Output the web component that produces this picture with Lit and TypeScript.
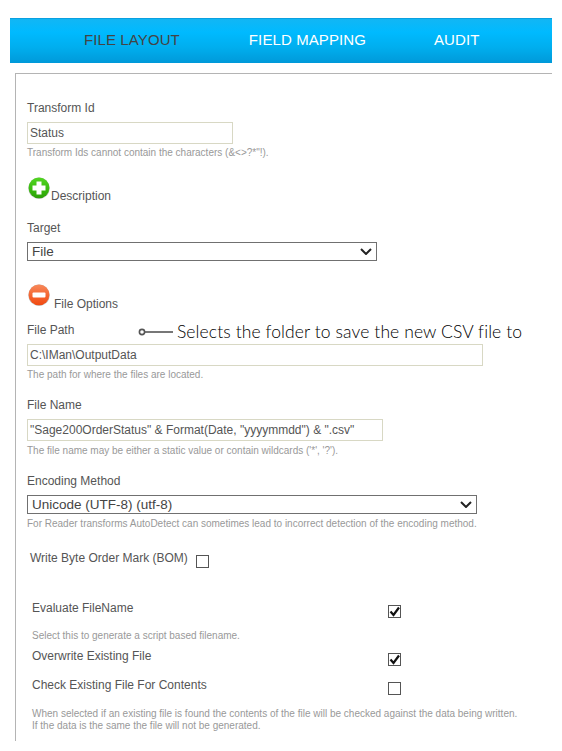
import { LitElement, html, css, svg } from 'lit';
import { customElement } from 'lit/decorators.js';

const chevron = html`<svg class="chev" width="12" height="7" viewBox="0 0 12 7"><path d="M1 1 L6 6 L11 1" fill="none" stroke="#222" stroke-width="2"/></svg>`;
const tick = svg`<path d="M2.5 6.5 L5.5 10 L11 2.5" fill="none" stroke="#111" stroke-width="2.2"/>`;

@customElement('app-root')
export class AppRoot extends LitElement {
  static styles = css`
    :host {
      display: block;
      width: 562px;
      height: 751px;
      overflow: hidden;
      background: #fff;
      font-family: 'Liberation Sans', Arial, sans-serif;
      color: #555;
      font-size: 12px;
    }
    * { box-sizing: border-box; }

    nav {
      margin: 18px 10px 10px;
      height: 45px;
      display: flex;
      align-items: center;
      padding: 0 0 3px 74px;
      border-top: 1px solid #0aa0e0;
      background: linear-gradient(#12b6f4 0, #00baff 30%, #00aeee 65%, #0099d9 100%);
      font-size: 15px;
      letter-spacing: 0.1px;
      color: #fff;
    }
    nav a { white-space: nowrap; }
    nav a.active { color: #444; }
    nav a + a { margin-left: 69px; }
    nav a + a + a { margin-left: 68px; }

    .panel {
      margin-left: 15px;
      width: 537px;
      height: 668px;
      border-top: 1px solid #b4b4b4;
      border-left: 1px solid #b4b4b4;
      padding: 27px 0 0 11px;
      position: relative;
    }

    .label { line-height: 14px; height: 14px; }
    .hint { font-size: 10px; line-height: 12px; color: #999; white-space: nowrap; }

    .text {
      height: 22px;
      border: 1px solid #d8d8c4;
      padding-left: 2px;
      line-height: 20px;
      color: #555;
      white-space: nowrap;
    }
    .select {
      height: 19px;
      border: 1px solid #707070;
      padding: 0 4px 0 4px;
      display: flex;
      align-items: center;
      justify-content: space-between;
      font-size: 13.5px;
      color: #444;
    }

    .toggle { display: flex; align-items: flex-end; height: 22px; margin-left: 1px; }
    .toggle .icon { width: 22px; height: 22px; flex: none; }

    .check {
      width: 13px;
      height: 13px;
      border: 1px solid #555;
      background: #fff;
      flex: none;
      display: block;
    }
    .check svg { display: block; margin: -1px 0 0 -1px; }

    .row { display: flex; align-items: flex-start; }
    .row .name { width: 356px; line-height: 14px; }

    .note {
      position: absolute;
      left: 122px;
      top: 248px;
      display: flex;
      align-items: center;
      gap: 3px;
      font-family: Lato, 'Liberation Sans', sans-serif;
      font-size: 17.5px;
      font-weight: 300;
      letter-spacing: 0.1px;
      color: #000;
      white-space: nowrap;
      line-height: 20px;
    }
  `;

  render() {
    return html`
      <nav>
        <a class="active">FILE LAYOUT</a>
        <a>FIELD MAPPING</a>
        <a>AUDIT</a>
      </nav>
      <div class="panel">
        <div class="label" style="margin-bottom:7px">Transform Id</div>
        <div class="text" style="width:206px">Status</div>
        <div class="hint" style="margin-top:3px">Transform Ids cannot contain the characters (&amp;&lt;&gt;?*"!).</div>

        <div class="toggle" style="margin-top:18px">
          <svg class="icon" viewBox="0 0 22 22">
            <defs>
              <linearGradient id="g" x1="0" y1="0" x2="0" y2="1"><stop offset="0" stop-color="#52d622"/><stop offset="0.6" stop-color="#38b90e"/><stop offset="1" stop-color="#2c9f08"/></linearGradient>
            </defs>
            <circle cx="11" cy="11.3" r="10.7" fill="#c4c4c4"/>
            <circle cx="11" cy="10.8" r="10.4" fill="url(#g)"/>
            <path d="M8.5 4.5h5v4h4v5h-4v4h-5v-4h-4v-5h4z" fill="#fff"/>
          </svg>
          <span style="line-height:14px;margin:0 0 -4px 1px">Description</span>
        </div>

        <div class="label" style="margin-top:22px;margin-bottom:7px">Target</div>
        <div class="select" style="width:350px"><span>File</span>${chevron}</div>

        <div class="toggle" style="margin-top:23px">
          <svg class="icon" viewBox="0 0 22 22">
            <defs>
              <linearGradient id="r" x1="0" y1="0" x2="0" y2="1"><stop offset="0" stop-color="#f78a5c"/><stop offset="0.6" stop-color="#f5612c"/><stop offset="1" stop-color="#f04a12"/></linearGradient>
            </defs>
            <circle cx="11" cy="11.3" r="10.7" fill="#c4c4c4"/>
            <circle cx="11" cy="10.8" r="10.4" fill="url(#r)"/>
            <rect x="4.5" y="8.5" width="13" height="5" rx="1" fill="#fff"/>
          </svg>
          <span style="line-height:14px;margin:0 0 -5px 4px">File Options</span>
        </div>

        <div class="label" style="margin-top:17px;margin-bottom:7px">File Path</div>
        <div class="text" style="width:456px">C:\\IMan\\OutputData</div>
        <div class="hint" style="margin-top:3px">The path for where the files are located.</div>

        <div class="note">
          <svg width="36" height="10" viewBox="0 0 36 10"><circle cx="4" cy="5" r="2.6" fill="none" stroke="#555" stroke-width="1.6"/><path d="M7 5h28" stroke="#555" stroke-width="1.6"/></svg>
          <span>Selects the folder to save the new CSV file to</span>
        </div>

        <div class="label" style="margin-top:17px;margin-bottom:7px">File Name</div>
        <div class="text" style="width:356px">"Sage200OrderStatus" &amp; Format(Date, "yyyymmdd") &amp; ".csv"</div>
        <div class="hint" style="margin-top:4px">The file name may be either a static value or contain wildcards ('*', '?').</div>

        <div class="label" style="margin-top:17px;margin-bottom:7px">Encoding Method</div>
        <div class="select" style="width:450px"><span>Unicode (UTF-8) (utf-8)</span>${chevron}</div>
        <div class="hint" style="margin-top:4px">For Reader transforms AutoDetect can sometimes lead to incorrect detection of the encoding method.</div>

        <div class="row" style="margin:21px 0 0 3px">
          <span style="line-height:14px;margin-right:8px">Write Byte Order Mark (BOM)</span>
          <span class="check" style="margin-top:4px"></span>
        </div>

        <div class="row" style="margin:33px 0 0 5px">
          <span class="name">Evaluate FileName</span>
          <span class="check" style="margin-top:4px"><svg width="14" height="14" viewBox="0 0 14 14">${tick}</svg></span>
        </div>
        <div class="hint" style="margin:12px 0 0 5px">Select this to generate a script based filename.</div>
        <div class="row" style="margin:7px 0 0 5px">
          <span class="name">Overwrite Existing File</span>
          <span class="check" style="margin-top:4px"><svg width="14" height="14" viewBox="0 0 14 14">${tick}</svg></span>
        </div>
        <div class="row" style="margin:12px 0 0 5px">
          <span class="name">Check Existing File For Contents</span>
          <span class="check" style="margin-top:4px"></span>
        </div>
        <div class="hint" style="margin:13px 0 0 5px">When selected if an existing file is found the contents of the file will be checked against the data being written.<br>If the data is the same the file will not be generated.</div>
      </div>
    `;
  }
}
